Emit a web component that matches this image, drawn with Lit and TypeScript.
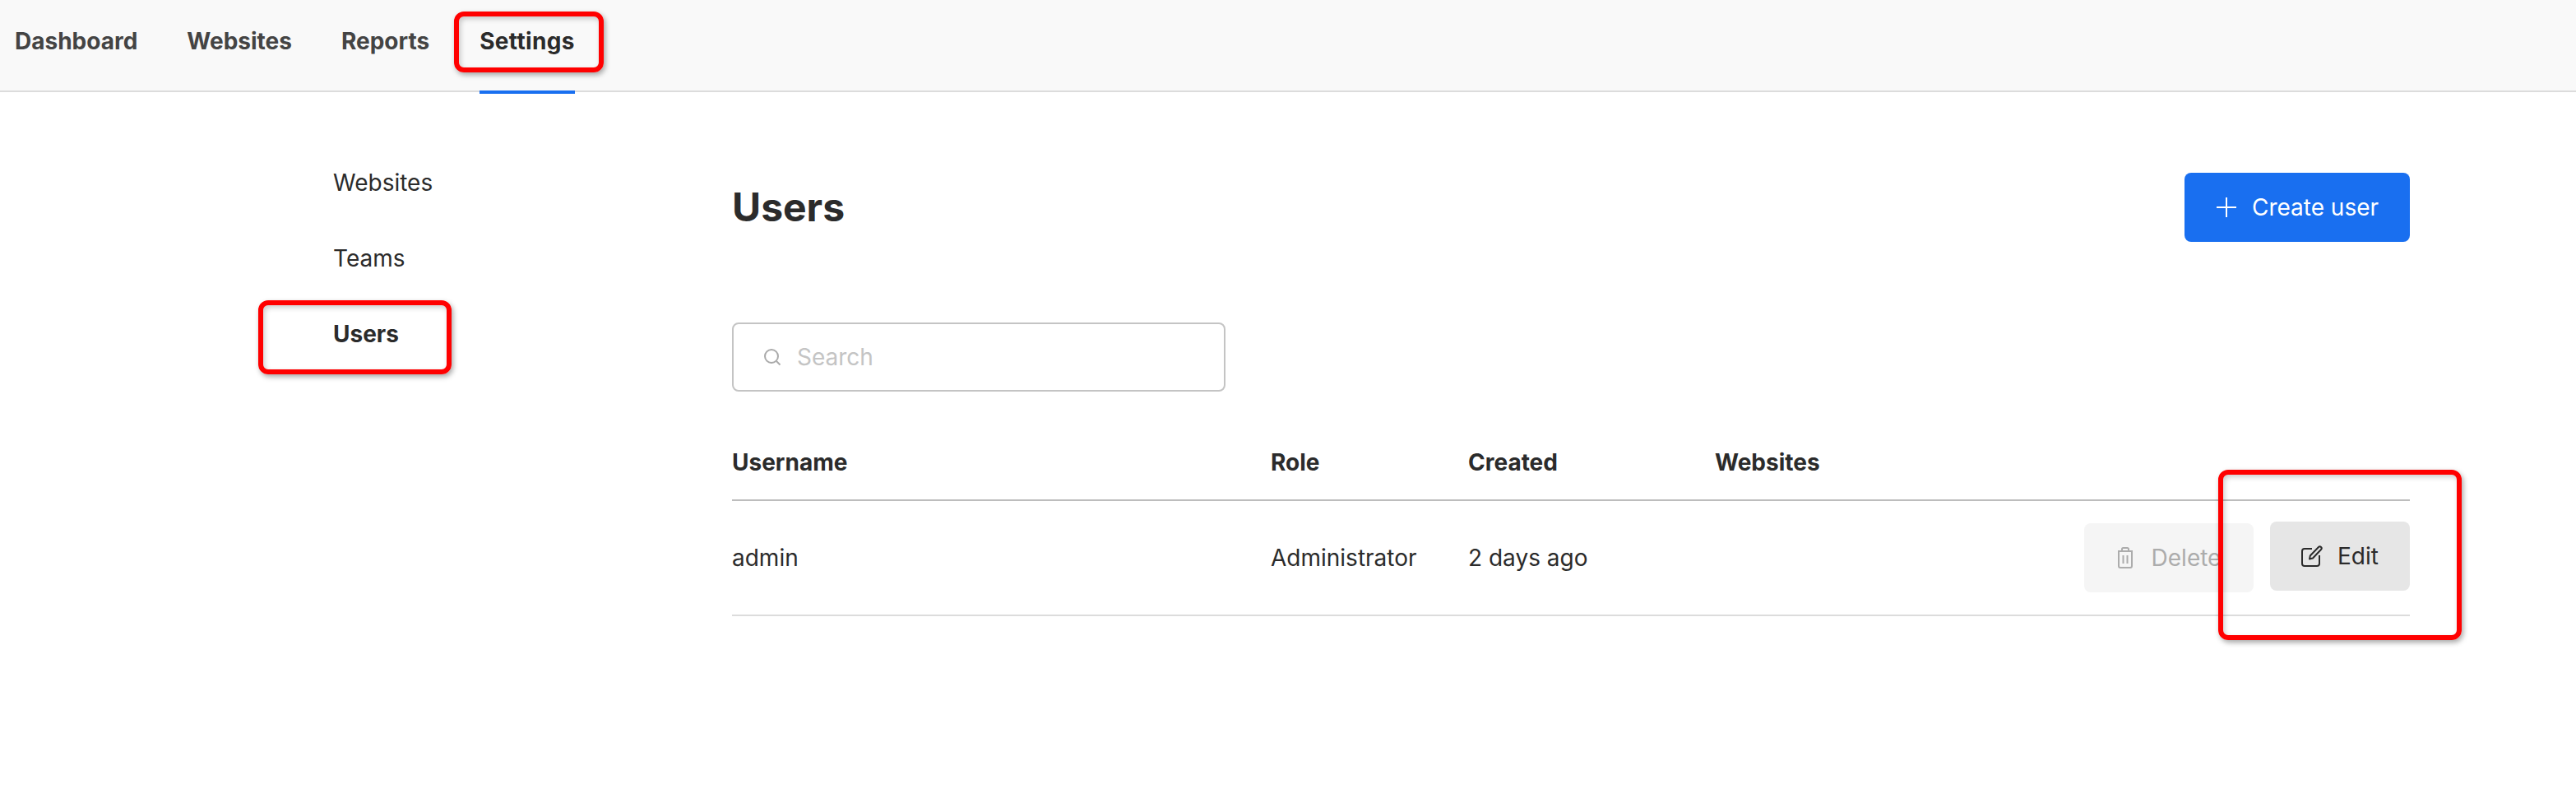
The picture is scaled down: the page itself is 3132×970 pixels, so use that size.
import { LitElement, html, css } from "lit";
import { customElement } from "lit/decorators.js";

@customElement("app-root")
export class AppRoot extends LitElement {
  static styles = css`
    :host { display: block; position: relative; width: 3132px; height: 970px; background: #fff; overflow: hidden;
      font-family: Inter, "Liberation Sans", sans-serif; font-size: 28px; color: #2b2b2b; }
    * { box-sizing: border-box; }
    .top { height: 112px; background: #f9f9f9; border-bottom: 2px solid #dcdcdc; display: flex; padding-left: 18px; gap: 60px; }
    .tab { position: relative; height: 110px; display: flex; align-items: center; padding-bottom: 11px; font-weight: 700; color: #444; }
    .tab.active { color: #2b2b2b; margin-left: 1px; letter-spacing: 0.35px; }
    .tab.active::after { content: ""; position: absolute; left: 0; right: 0; top: 110px; height: 4px; background: #196ff0; }
    .body { display: grid; grid-template-columns: 890px 2040px; }
    .side { display: flex; flex-direction: column; padding: 64px 0 0 405px; }
    .side a { height: 92px; display: flex; align-items: center; }
    .side a.on { font-weight: 700; }
    .head { display: flex; justify-content: space-between; align-items: center; height: 84px; margin-top: 98px; }
    h1 { margin: 0; font-size: 48px; font-weight: 700; line-height: 84px; }
    .btn { display: flex; align-items: center; justify-content: center; border-radius: 8px; height: 84px; gap: 18px; }
    .primary { width: 274px; background: #196ff0; color: #fff; }
    .search { width: 600px; height: 84px; margin-top: 98px; border: 2px solid #c4c4c4; border-radius: 8px; display: flex; align-items: center; padding-left: 36px; gap: 19px; color: #c4c4c4; }
    .row { display: grid; grid-template-columns: 655px 240px 300px 1fr; }
    .thead { height: 86px; margin-top: 47px; border-bottom: 2px solid #bdbdbd; font-weight: 700; }
    .thead span { padding-top: 21px; line-height: 36px; }
    .tbody { height: 140px; border-bottom: 2px solid #dcdcdc; align-items: center; }
    .actions { display: flex; justify-content: flex-end; gap: 20px; align-items: flex-start; align-self: start; padding-top: 25px; }
    .del { width: 206px; background: #f5f5f5; color: #acacac; margin-top: 2px; gap: 22px; }
    .edit { width: 170px; background: #e6e6e6; }
    svg { display: block; flex: none; }
    .mark { position: absolute; border: 6px solid #f00; border-radius: 12px; box-shadow: 2px 3px 6px rgba(0,0,0,.35), inset 2px 3px 6px rgba(0,0,0,.2); pointer-events: none; }
    .m1 { left: 552px; top: 14px; width: 182px; height: 74px; }
    .m2 { left: 314px; top: 365px; width: 235px; height: 90px; }
    .m3 { left: 2697px; top: 571px; width: 296px; height: 207px; }
  `;

  render() {
    return html`
      <div class="top">
        <div class="tab">Dashboard</div>
        <div class="tab">Websites</div>
        <div class="tab">Reports</div>
        <div class="tab active">Settings</div>
      </div>
      <div class="body">
        <nav class="side"><a>Websites</a><a>Teams</a><a class="on">Users</a></nav>
        <main>
          <div class="head">
            <h1>Users</h1>
            <div class="btn primary">
              <svg width="26" height="26" viewBox="0 0 26 26" fill="none" stroke="#fff" stroke-width="2"><path d="M13 1v24M1 13h24"/></svg>
              Create user
            </div>
          </div>
          <div class="search">
            <svg width="22" height="22" viewBox="0 0 22 22" fill="none" stroke="#aaa" stroke-width="2"><circle cx="10" cy="10" r="8"/><path d="M16 16l4.500 4.500"/></svg>
            Search
          </div>
          <div class="row thead"><span>Username</span><span>Role</span><span>Created</span><span>Websites</span></div>
          <div class="row tbody">
            <span>admin</span><span>Administrator</span><span>2 days ago</span>
            <div class="actions">
              <div class="btn del">
                <svg width="20" height="26" viewBox="0 0 20 26" fill="none" stroke="#acacac" stroke-width="2" stroke-linejoin="round"><path d="M1 5h18M6 5V2.500A1.500 1.500 0 0 1 7.500 1h5A1.500 1.500 0 0 1 14 2.500V5M2 5v18a2 2 0 0 0 2 2h12a2 2 0 0 0 2-2V5M7.500 10v10M12.500 10v10"/></svg>
                Delete
              </div>
              <div class="btn edit">
                <svg width="26" height="26" viewBox="0 0 26 26" fill="none" stroke="#2b2b2b" stroke-width="2" stroke-linejoin="round"><path d="M13 4H4a3 3 0 0 0-3 3v15a3 3 0 0 0 3 3h15a3 3 0 0 0 3-3V12"/><path d="M10 16.500l.8-4L21 2a2 2 0 0 1 3 3L14 15.500z"/></svg>
                Edit
              </div>
            </div>
          </div>
        </main>
      </div>
      <div class="mark m1"></div>
      <div class="mark m2"></div>
      <div class="mark m3"></div>
    `;
  }
}
